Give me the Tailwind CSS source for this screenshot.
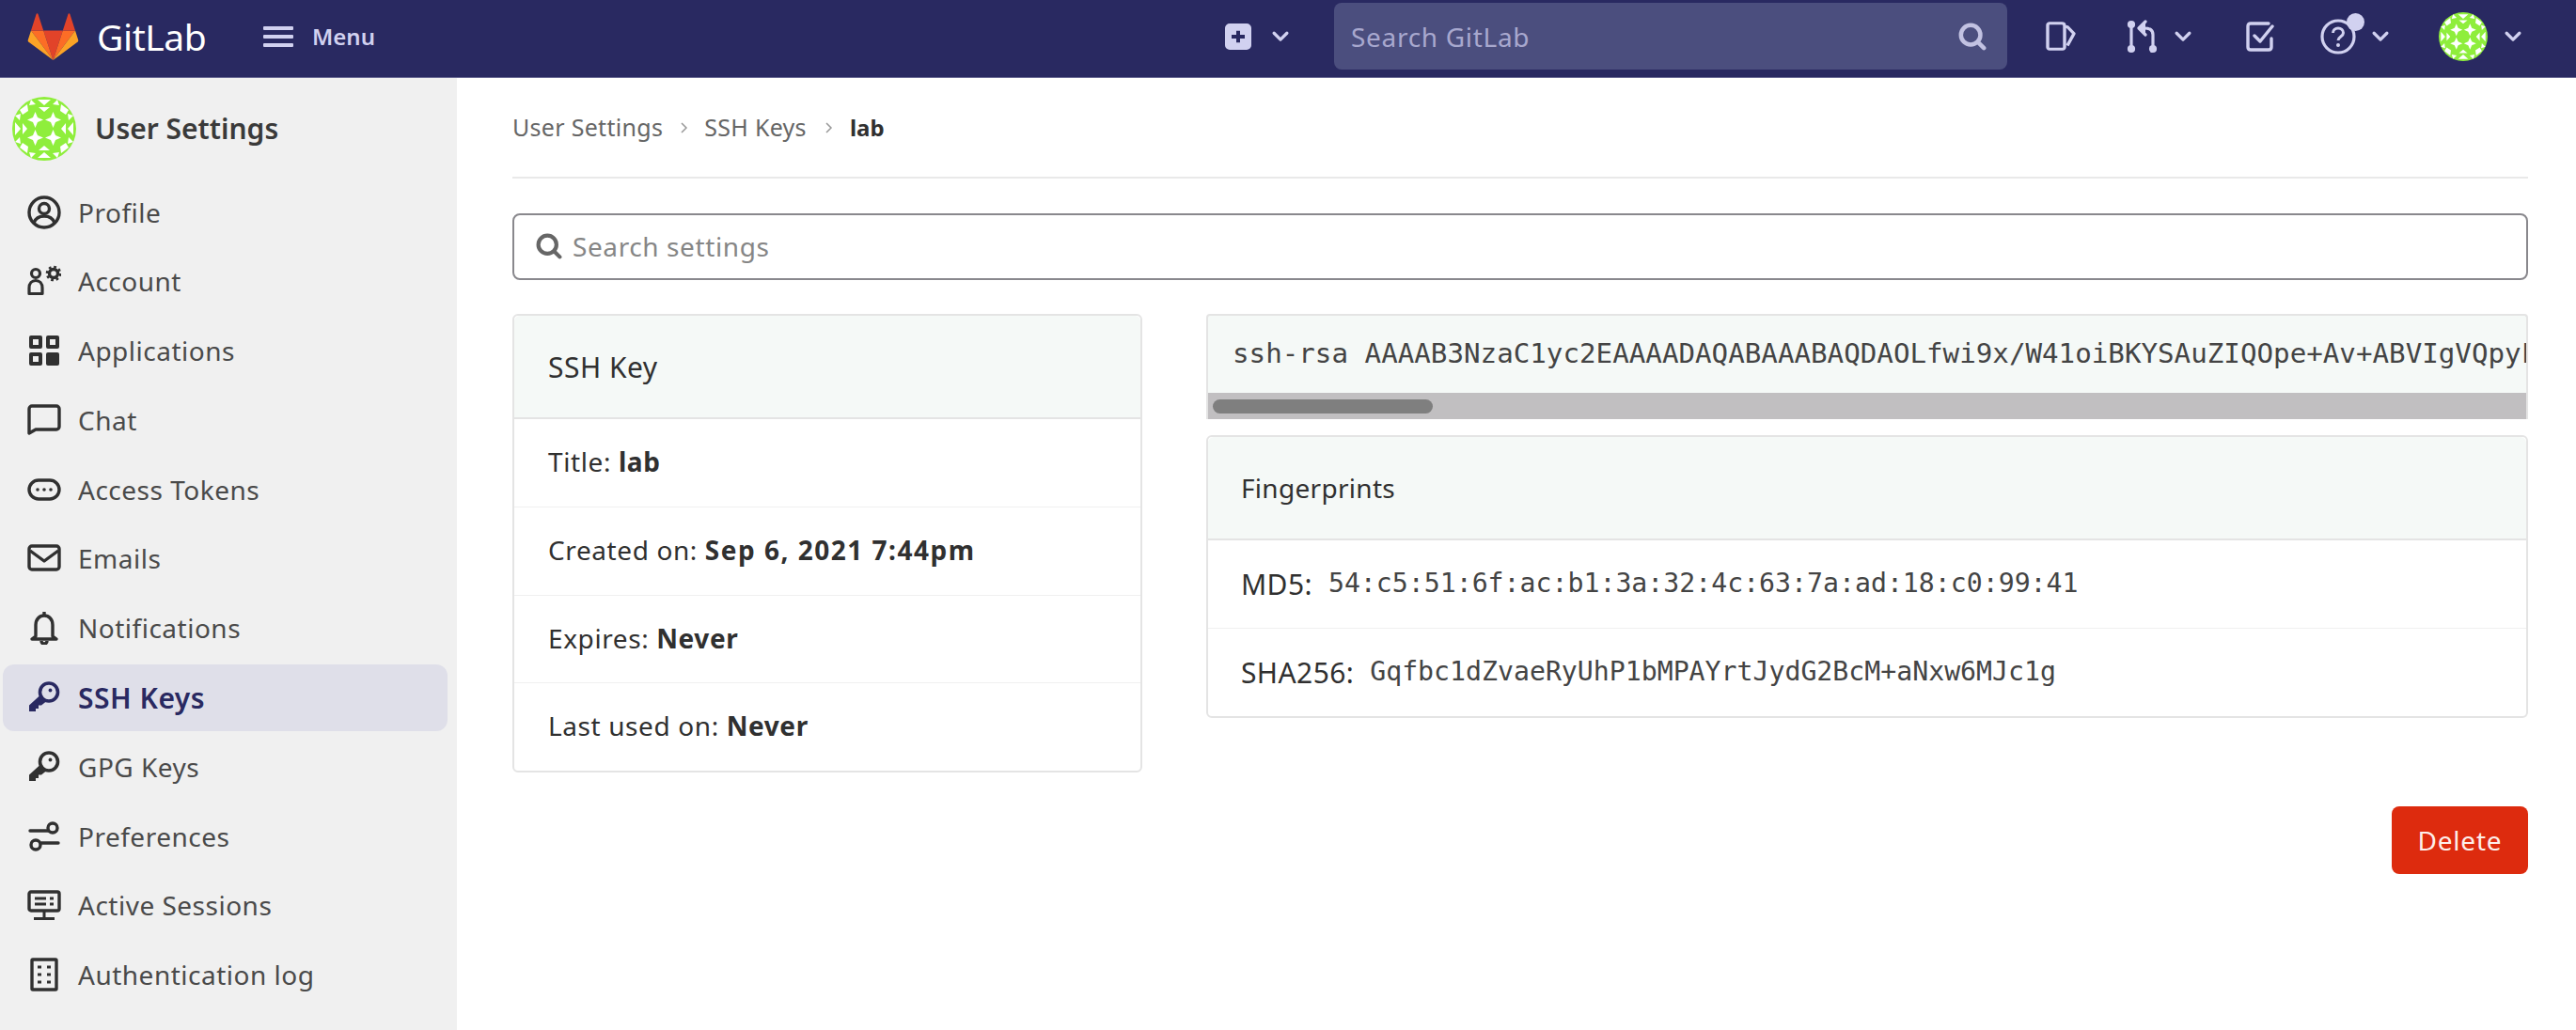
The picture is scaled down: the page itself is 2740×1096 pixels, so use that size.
<!DOCTYPE html>
<html lang="en">
<head>
    <meta charset="UTF-8">
    <title>SSH Keys - User Settings - GitLab</title>
    <script src="https://cdn.jsdelivr.net/npm/@tailwindcss/browser@4"></script>
</head>
<body class="bg-white h-[1096px] overflow-hidden font-['Noto_Sans',sans-serif] text-[#303030]">
    <!-- shared icons -->
    <svg class="hidden">
        <symbol id="identicon" viewBox="0 0 68 68">
            <circle cx="34" cy="34" r="34" fill="#8fee3c"/>
            <g fill="#fff">
                <path d="M24.500 16l2.500 6 6 2.500-6 2.500-2.500 6-2.500-6-6-2.500 6-2.500zM43.500 16l2.500 6 6 2.500-6 2.500-2.500 6-2.500-6-6-2.500 6-2.500zM24.500 35l2.500 6 6 2.500-6 2.500-2.500 6-2.500-6-6-2.500 6-2.500zM43.500 35l2.500 6 6 2.500-6 2.500-2.500 6-2.500-6-6-2.500 6-2.500z"/>
                <path d="M27 3h14l-7 6zM27 65h14l-7-6zM3 27v14l6-7zM65 27v14l-6-7z"/>
                <path d="M28 11h12l-6 5zM28 57h12l-6-5zM11 28v12l5-6zM57 28v12l-5-6z"/>
                <path d="M8 14l8-6 1 7-6 4zM60 14l-8-6-1 7 6 4zM8 54l8 6 1-7-6-4zM60 54l-8 6-1-7 6-4z"/>
                <path d="M20 3l5 5-7 1zM48 3l-5 5 7 1zM20 65l5-5-7-1zM48 65l-5-5 7-1zM3 20l5 5 1-7zM65 20l-5 5-1-7zM3 48l5-5 1 7zM65 48l-5-5-1 7z"/>
            </g>
        </symbol>
        <symbol id="chev" viewBox="0 0 16 16">
            <path d="M2.500 5l5.500 5.500L13.500 5" fill="none" stroke="currentColor" stroke-width="2.600" stroke-linecap="round" stroke-linejoin="round"/>
        </symbol>
        <symbol id="key" viewBox="0 0 36 36">
            <circle cx="23" cy="12.500" r="9.500" fill="none" stroke="currentColor" stroke-width="3.600"/>
            <circle cx="24.500" cy="10.500" r="1.900" fill="currentColor"/>
            <path fill="currentColor" d="M13.500 16l6.500 6.500-5 4h-3V30H9v3H2v-6.500z"/>
        </symbol>
        <symbol id="search" viewBox="0 0 16 16">
            <path fill="none" stroke="currentColor" stroke-width="2.400" stroke-linecap="round" d="M7 1.500a5.500 5.500 0 1 0 0 11 5.500 5.500 0 0 0 0-11zM11 11l3.500 3.500"/>
        </symbol>
        <symbol id="crumb" viewBox="0 0 14 14">
            <path d="M5 2l5 5-5 5" fill="none" stroke="currentColor" stroke-width="1.500"/>
        </symbol>
    </svg>

    <header class="h-[83px] pb-[5px] bg-[#292961] border-b border-[#6b6b96] flex items-center text-[#d1d1f0]">
        <svg class="w-[55px] h-[50px] ml-[29px]" viewBox="0 0 54 50">
            <path fill="#e24329" d="M27 50L16.700 18.500h20.600z"/>
            <path fill="#fc6d26" d="M27 50L16.700 18.500H3.500zM27 50l10.300-31.500h13.200z"/>
            <path fill="#fca326" d="M3.500 18.500L.3 28.400c-.3.9 0 1.900.8 2.400L27 50zM50.500 18.500l3.200 9.900c.3.9 0 1.900-.8 2.400L27 50z"/>
            <path fill="#e24329" d="M3.500 18.500h13.200L11 1c-.3-.9-1.600-.9-1.900 0zM50.500 18.500H37.300L43 1c.3-.9 1.600-.9 1.900 0z"/>
        </svg>
        <span class="ml-[19px] w-[125px] text-[39px] leading-none text-white tracking-[-0.4px]">GitLab</span>
        <svg class="w-[32px] h-[24px] ml-[52px]" viewBox="0 0 32 24" fill="currentColor"><rect width="32" height="4" y="1" rx="1"/><rect width="32" height="4" y="10" rx="1"/><rect width="32" height="4" y="19" rx="1"/></svg>
        <span class="ml-[20px] text-[24px] font-semibold">Menu</span>

        <svg class="w-[28px] h-[28px] ml-[904px]" viewBox="0 0 28 29" preserveAspectRatio="none"><path fill="currentColor" fill-rule="evenodd" d="M5 0h18a5 5 0 0 1 5 5v19a5 5 0 0 1-5 5H5a5 5 0 0 1-5-5V5a5 5 0 0 1 5-5zm7 8v4.500H7v4h5V21h4v-4.500h5v-4h-5V8z"/></svg>
        <svg class="w-[20px] h-[20px] ml-[21px]"><use href="#chev"/></svg>
        <div class="w-[716px] h-[71px] ml-[47px] rounded-[8px] bg-[#4b4e7e] flex items-center justify-between pl-[18px] pr-[22px]">
            <span class="text-[28px] tracking-[0.7px] text-[#a8a8ce]">Search GitLab</span>
            <svg class="w-[30px] h-[30px] text-[#c2c2e2]"><use href="#search"/></svg>
        </div>

        <svg class="w-[32px] h-[31px] ml-[41px]" viewBox="0 0 32 34" preserveAspectRatio="none" fill="none" stroke="currentColor" stroke-width="3.400" stroke-linejoin="round"><path d="M4 2h13c2 0 3 1 3 3v25c0 1-1 2-2 2H4c-1 0-2-1-2-2V4c0-1 1-2 2-2z"/><path d="M20 6h3l7 8-7 14"/></svg>
        <svg class="w-[33px] h-[36px] ml-[54px]" viewBox="0 0 33 36" fill="none" stroke="currentColor" stroke-width="3.200" stroke-linecap="round" stroke-linejoin="round"><circle cx="5" cy="5" r="2.500" fill="currentColor"/><circle cx="5" cy="31" r="2.500" fill="currentColor"/><circle cx="28" cy="31" r="2.500" fill="currentColor"/><path d="M5 7v22M28 29V16c0-5-3-7-9-7"/><path d="M20 2l-7 7 7 7" fill="currentColor"/></svg>
        <svg class="w-[20px] h-[20px] ml-[17px]"><use href="#chev"/></svg>
        <svg class="w-[30px] h-[32px] ml-[57px]" viewBox="0 0 30 32" fill="none" stroke="currentColor" stroke-width="3.400" stroke-linecap="round" stroke-linejoin="round"><path d="M24 2H5C3 2 2 3 2 5v22c0 2 1 3 3 3h19c2 0 3-1 3-3V18"/><path d="M9 15l6 6L28 5"/></svg>
        <div class="relative w-[38px] h-[38px] ml-[49px]">
            <svg class="w-[38px] h-[38px]" viewBox="0 0 38 38" fill="none" stroke="currentColor"><circle cx="19" cy="19" r="17" stroke-width="3.200"/><path d="M13.500 15c0-3 2.500-5 5.500-5s5.500 2 5.500 5c0 4-5.500 4-5.500 8" stroke-width="3"/><circle cx="19" cy="28" r="2" fill="currentColor" stroke="none"/></svg>
            <span class="absolute -top-[6px] -right-[9px] w-[19px] h-[19px] rounded-full bg-[#d1d1f0]"></span>
        </div>
        <svg class="w-[20px] h-[20px] ml-[16px]"><use href="#chev"/></svg>
        <svg class="w-[52px] h-[52px] ml-[52px]"><use href="#identicon"/></svg>
        <svg class="w-[20px] h-[20px] ml-[17px]"><use href="#chev"/></svg>
    </header>

    <div class="flex h-[1013px]">
        <aside class="w-[486px] shrink-0 bg-[#f0f0f0]">
            <div class="flex items-center h-[107px] pl-[13px]">
                <svg class="w-[68px] h-[68px]"><use href="#identicon"/></svg>
                <span class="ml-[20px] text-[30px] font-semibold text-[#3a3a3a]">User Settings</span>
            </div>
            <nav class="flex flex-col gap-[2.8px] pl-[3px] pr-[10px] text-[28px] tracking-[0.5px] text-[#4a4a4a]">
                <a class="flex items-center h-[71px] pl-[26px] gap-[18px]">
                    <svg class="w-[36px] h-[36px] text-[#303030]" viewBox="0 0 36 36" fill="none" stroke="currentColor" stroke-width="3.400"><circle cx="18" cy="18" r="16"/><circle cx="18" cy="14" r="5.500"/><path d="M7 29c2-5 6-7 11-7s9 2 11 7"/></svg>
                    Profile
                </a>
                <a class="flex items-center h-[71px] pl-[26px] gap-[18px]">
                    <svg class="w-[36px] h-[36px] text-[#303030]" viewBox="0 0 36 36" fill="none" stroke="currentColor" stroke-width="3.200"><circle cx="9" cy="10" r="4.500"/><path d="M2 31.500v-6c0-5 3-8 7-8s7 3 7 8v6z" stroke-linejoin="round"/><circle cx="28" cy="10" r="4.500" stroke-width="3.400"/><circle cx="28" cy="10" r="7" stroke-width="2.600" stroke-dasharray="2.750 2.750"/></svg>
                    Account
                </a>
                <a class="flex items-center h-[71px] pl-[26px] gap-[18px]">
                    <svg class="w-[36px] h-[36px] text-[#303030]" viewBox="0 0 36 36" fill="currentColor"><path fill-rule="evenodd" d="M4 2h10a2 2 0 0 1 2 2v10a2 2 0 0 1-2 2H4a2 2 0 0 1-2-2V4a2 2 0 0 1 2-2zm2 4v6h6V6zM22 2h10a2 2 0 0 1 2 2v10a2 2 0 0 1-2 2H22a2 2 0 0 1-2-2V4a2 2 0 0 1 2-2zm2 4v6h6V6zM4 20h10a2 2 0 0 1 2 2v10a2 2 0 0 1-2 2H4a2 2 0 0 1-2-2V22a2 2 0 0 1 2-2zm2 4v6h6v-6z"/><rect x="20" y="20" width="14" height="14" rx="2"/></svg>
                    Applications
                </a>
                <a class="flex items-center h-[71px] pl-[26px] gap-[18px]">
                    <svg class="w-[36px] h-[36px] text-[#303030]" viewBox="0 0 36 36" fill="none" stroke="currentColor" stroke-width="3.400" stroke-linejoin="round"><path d="M5 3h26c1.500 0 3 1.500 3 3v19c0 1.500-1.500 3-3 3H9l-7 4V6c0-1.500 1.500-3 3-3z"/></svg>
                    Chat
                </a>
                <a class="flex items-center h-[71px] pl-[26px] gap-[18px]">
                    <svg class="w-[36px] h-[36px] text-[#303030]" viewBox="0 0 36 36" fill="none" stroke="currentColor" stroke-width="3.400"><rect x="2" y="8" width="32" height="20" rx="10"/><circle cx="11" cy="18" r="1.800" fill="currentColor" stroke="none"/><circle cx="18" cy="18" r="1.800" fill="currentColor" stroke="none"/><circle cx="25" cy="18" r="1.800" fill="currentColor" stroke="none"/></svg>
                    Access Tokens
                </a>
                <a class="flex items-center h-[71px] pl-[26px] gap-[18px]">
                    <svg class="w-[36px] h-[36px] text-[#303030]" viewBox="0 0 36 36" fill="none" stroke="currentColor" stroke-width="3.400" stroke-linejoin="round"><rect x="2" y="5" width="32" height="25" rx="3"/><path d="M3 10l15 11 15-11"/></svg>
                    Emails
                </a>
                <a class="flex items-center h-[71px] pl-[26px] gap-[18px]">
                    <svg class="w-[36px] h-[36px] text-[#303030]" viewBox="0 0 36 36" fill="none" stroke="currentColor" stroke-width="3.400" stroke-linejoin="round"><path d="M9 27V15c0-6 4-10 9-10s9 4 9 10v12l4 3H5z"/><path d="M15 32c0 2 1.500 3 3 3s3-1 3-3M18 1v4"/></svg>
                    Notifications
                </a>
                <a class="flex items-center h-[71px] pl-[26px] gap-[18px] rounded-[12px] bg-[#dfdfe9] text-[#292961] font-semibold text-[30px]">
                    <svg class="w-[36px] h-[36px]"><use href="#key"/></svg>
                    SSH Keys
                </a>
                <a class="flex items-center h-[71px] pl-[26px] gap-[18px]">
                    <svg class="w-[36px] h-[36px] text-[#303030]"><use href="#key"/></svg>
                    GPG Keys
                </a>
                <a class="flex items-center h-[71px] pl-[26px] gap-[18px]">
                    <svg class="w-[36px] h-[36px] text-[#303030]" viewBox="0 0 36 36" fill="none" stroke="currentColor" stroke-width="3.400" stroke-linecap="round"><circle cx="27" cy="9" r="5"/><circle cx="9" cy="27" r="5"/><path d="M3 12h19M15 25h18"/></svg>
                    Preferences
                </a>
                <a class="flex items-center h-[71px] pl-[26px] gap-[18px]">
                    <svg class="w-[36px] h-[36px] text-[#303030]" viewBox="0 0 36 36" fill="none" stroke="currentColor" stroke-width="3.400"><rect x="2" y="4" width="32" height="20" rx="2"/><path d="M18 24v8M7 32.500h22M8 11h12M24 11h4M8 17h12M24 17h4" stroke-width="3"/></svg>
                    Active Sessions
                </a>
                <a class="flex items-center h-[71px] pl-[26px] gap-[18px]">
                    <svg class="w-[36px] h-[36px] text-[#303030]" viewBox="0 0 36 36" fill="none" stroke="currentColor" stroke-width="3.400"><rect x="5" y="2" width="26" height="32" rx="1"/><path d="M11 10h4M21 10h4M11 18h4M21 18h4M11 26h4M21 26h4" stroke-width="3"/></svg>
                    Authentication log
                </a>
            </nav>
        </aside>

        <main class="flex-1 min-w-0 pl-[59px] pr-[51px]">
            <div class="flex items-center h-[107px] border-b-2 border-[#e9e9e9] text-[25px] tracking-[0.3px] text-[#666]">
                <span>User Settings</span>
                <svg class="w-[14px] h-[14px] mx-[15px] text-[#999]"><use href="#crumb"/></svg>
                <span>SSH Keys</span>
                <svg class="w-[14px] h-[14px] mx-[16px] text-[#999]"><use href="#crumb"/></svg>
                <span class="font-bold text-[24px] tracking-normal text-[#303030]">lab</span>
            </div>

            <div class="mt-[37px] h-[71px] rounded-[8px] border-2 border-[#89888d] flex items-center pl-[23px] pb-[2px]">
                <svg class="w-[28px] h-[28px] text-[#666]"><use href="#search"/></svg>
                <span class="ml-[11px] text-[28px] tracking-[0.6px] text-[#868686]">Search settings</span>
            </div>

            <div class="mt-[36px] flex gap-[68px] items-start">
                <div class="w-[670px] shrink-0 rounded-[6px] border-2 border-[#e4e4e4] text-[28px] tracking-[0.6px]">
                    <div class="h-[110px] px-[36px] flex items-center bg-[#f5f9f7] border-b-2 border-[#e4e4e4] rounded-t-[6px] text-[30px] tracking-[0.5px]">SSH Key</div>
                    <div class="h-[94px] px-[36px] pb-[3px] flex items-center border-b border-[#f0f0f0] whitespace-pre">Title: <b class="font-bold">lab</b></div>
                    <div class="h-[94px] px-[36px] pb-[3px] flex items-center border-b border-[#f0f0f0] whitespace-pre">Created on: <b class="font-bold tracking-[1.5px]">Sep 6, 2021 7:44pm</b></div>
                    <div class="h-[93px] px-[36px] pb-[3px] flex items-center border-b border-[#f0f0f0] whitespace-pre">Expires: <b class="font-bold">Never</b></div>
                    <div class="h-[93px] px-[36px] pb-[3px] flex items-center whitespace-pre">Last used on: <b class="font-bold">Never</b></div>
                </div>

                <div class="flex-1 min-w-0">
                    <div class="border-x-2 border-t-2 border-[#e4e4e4] rounded-t-[4px] bg-[#f5f9f7] h-[112px] flex flex-col overflow-hidden">
                        <div class="flex-1 min-h-0 flex items-center pl-[26px] whitespace-nowrap overflow-hidden font-['DejaVu_Sans_Mono',monospace] text-[29.200px] text-[#444]">ssh-rsa AAAAB3NzaC1yc2EAAAADAQABAAABAQDAOLfwi9x/W41oiBKYSAuZIQOpe+Av+ABVIgVQpyFxyz</div>
                        <div class="h-[28px] shrink-0 bg-[#c1bfc1] pl-[5px] flex items-center">
                            <div class="w-[234px] h-[15px] rounded-full bg-[#7f7f7f]"></div>
                        </div>
                    </div>
                    <div class="mt-[17px] rounded-[6px] border-2 border-[#e4e4e4] text-[30px] tracking-[0.4px]">
                        <div class="h-[110px] px-[35px] flex items-center bg-[#f5f9f7] border-b-2 border-[#e4e4e4] rounded-t-[6px] text-[28px] tracking-[0.3px]">Fingerprints</div>
                        <div class="h-[94px] px-[35px] flex items-center border-b border-[#f0f0f0] whitespace-nowrap">MD5:<code class="ml-[17px] font-['DejaVu_Sans_Mono',monospace] text-[28.200px] tracking-normal text-[#444]">54:c5:51:6f:ac:b1:3a:32:4c:63:7a:ad:18:c0:99:41</code></div>
                        <div class="h-[93px] px-[35px] flex items-center whitespace-nowrap">SHA256:<code class="ml-[17px] font-['DejaVu_Sans_Mono',monospace] text-[28.200px] tracking-normal text-[#444]">Gqfbc1dZvaeRyUhP1bMPAYrtJydG2BcM+aNxw6MJc1g</code></div>
                    </div>
                </div>
            </div>

            <div class="mt-[36px] flex justify-end">
                <button class="w-[145px] h-[72px] rounded-[8px] bg-[#dd2b0e] text-[#fdeeea] text-[28px] tracking-[0.8px]">Delete</button>
            </div>
        </main>
    </div>
</body>
</html>
